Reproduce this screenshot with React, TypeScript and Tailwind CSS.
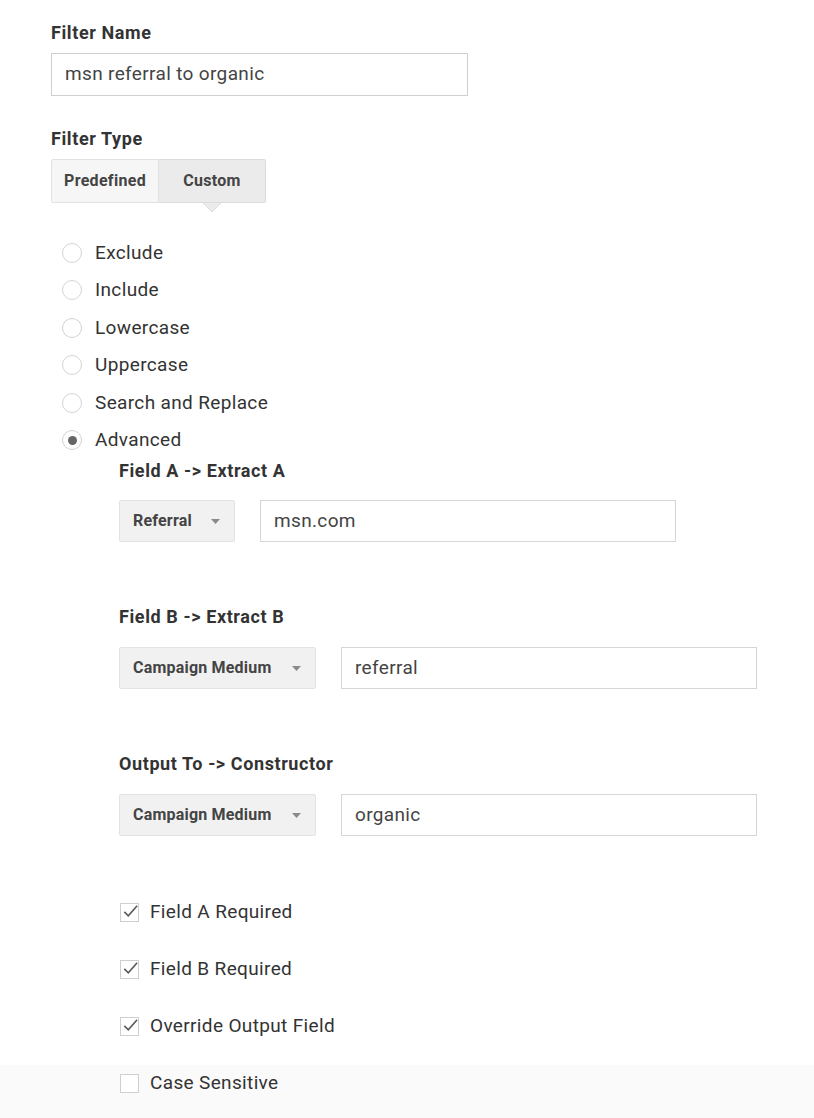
import React, { useState } from 'react';

const font = { fontFamily: 'Roboto, "Liberation Sans", sans-serif' };

const Label = ({ children }: { children: React.ReactNode }) => (
  <div className="text-[18px] leading-[18px] font-bold tracking-[0.6px] text-[#333]">{children}</div>
);

const SelectBox = ({ value, width }: { value: string; width: string }) => (
  <div
    className={`${width} h-[42px] flex items-center justify-between pl-[13px] pr-[14px] bg-[#f1f1f1] border border-[#e3e3e3] rounded-[2px] text-[16px] font-bold tracking-[0.2px] text-[#444]`}
  >
    <span>{value}</span>
    <svg width="9" height="5" viewBox="0 0 9 5">
      <path d="M0 0 L9 0 L4.5 5 Z" fill="#8a8a8a" />
    </svg>
  </div>
);

const TextBox = ({ value, width }: { value: string; width: string }) => (
  <div
    className={`${width} h-[42px] flex items-center px-[13px] border border-[#d6d6d6] bg-white text-[19px] tracking-[0.35px] text-[#444]`}
  >
    {value}
  </div>
);

const Radio = ({ label, checked }: { label: string; checked?: boolean }) => (
  <div className="h-[37.5px] flex items-center">
    <div className="w-[20px] h-[20px] ml-[11px] rounded-full border-[1.5px] border-[#d4d4d4] flex items-center justify-center">
      {checked && <div className="w-[9px] h-[9px] rounded-full bg-[#666]" />}
    </div>
    <span className="ml-[13px] text-[19px] tracking-[0.35px] text-[#333]">{label}</span>
  </div>
);

const Check = ({ label, checked }: { label: string; checked?: boolean }) => (
  <div className="h-[57px] flex items-center">
    <div className="w-[19px] h-[19px] ml-[1px] border border-[#cfcfcf] bg-white flex items-center justify-center">
      {checked && (
        <svg width="17" height="14" viewBox="0 0 17 14" className="-mt-[3px] ml-[2px]">
          <path d="M1.5 8 L6 12.5 L16 1" fill="none" stroke="#5a5a5a" strokeWidth="1.8" />
        </svg>
      )}
    </div>
    <span className="ml-[11px] text-[19px] tracking-[0.35px] text-[#333]">{label}</span>
  </div>
);

export default function App() {
  const [tab] = useState('Custom');

  return (
    <div className="w-[814px] min-h-[1118px] flex flex-col bg-white" style={font}>
      <div className="pl-[51px] pt-[24px]">
        <Label>Filter Name</Label>
        <div className="mt-[11px] w-[417px] h-[43px] flex items-center px-[13px] border border-[#cfcfcf] text-[19px] tracking-[0.35px] text-[#444]">
          msn referral to organic
        </div>

        <div className="mt-[34px]">
          <Label>Filter Type</Label>
        </div>
        <div className="mt-[11px] flex">
          <div
            className={`w-[108px] h-[44px] flex items-center justify-center border border-[#e2e2e2] rounded-l-[2px] text-[16px] font-bold tracking-[0.3px] text-[#444] ${tab === 'Predefined' ? 'bg-[#ebebeb]' : 'bg-[#f6f6f6]'}`}
          >
            Predefined
          </div>
          <div
            className={`relative w-[107px] h-[44px] flex items-center justify-center border border-l-0 border-[#dcdcdc] rounded-r-[2px] text-[16px] font-bold tracking-[0.3px] text-[#444] ${tab === 'Custom' ? 'bg-[#ebebeb]' : 'bg-[#f6f6f6]'}`}
          >
            Custom
            <svg width="18" height="10" viewBox="0 0 18 10" className="absolute left-1/2 -translate-x-1/2 top-[43px]">
              <path d="M0 0 L9 9 L18 0 Z" fill="#ebebeb" />
              <path d="M0 0 L9 9 L18 0" fill="none" stroke="#dcdcdc" strokeWidth="1" />
            </svg>
          </div>
        </div>

        <div className="mt-[31px]">
          <Radio label="Exclude" />
          <Radio label="Include" />
          <Radio label="Lowercase" />
          <Radio label="Uppercase" />
          <Radio label="Search and Replace" />
          <Radio label="Advanced" checked />
        </div>

        <div className="pl-[68px]">
          <div className="mt-[3px]">
            <Label>Field A -&gt; Extract A</Label>
          </div>
          <div className="mt-[20px] flex gap-[25px]">
            <SelectBox value="Referral" width="w-[116px]" />
            <TextBox value="msn.com" width="w-[416px]" />
          </div>

          <div className="mt-[66px]">
            <Label>Field B -&gt; Extract B</Label>
          </div>
          <div className="mt-[21px] flex gap-[25px]">
            <SelectBox value="Campaign Medium" width="w-[197px]" />
            <TextBox value="referral" width="w-[416px]" />
          </div>

          <div className="mt-[66px]">
            <Label>Output To -&gt; Constructor</Label>
          </div>
          <div className="mt-[21px] flex gap-[25px]">
            <SelectBox value="Campaign Medium" width="w-[197px]" />
            <TextBox value="organic" width="w-[416px]" />
          </div>

          <div className="mt-[47.5px]">
            <Check label="Field A Required" checked />
            <Check label="Field B Required" checked />
            <Check label="Override Output Field" checked />
          </div>
        </div>
      </div>

      <div className="mt-[10.5px] flex-1 bg-[#fafafa] pl-[119px]">
        <div className="h-[36px] flex items-center">
          <div className="w-[19px] h-[19px] ml-[1px] border border-[#cfcfcf] bg-white" />
          <span className="ml-[11px] text-[19px] tracking-[0.35px] text-[#333]">Case Sensitive</span>
        </div>
      </div>
    </div>
  );
}
